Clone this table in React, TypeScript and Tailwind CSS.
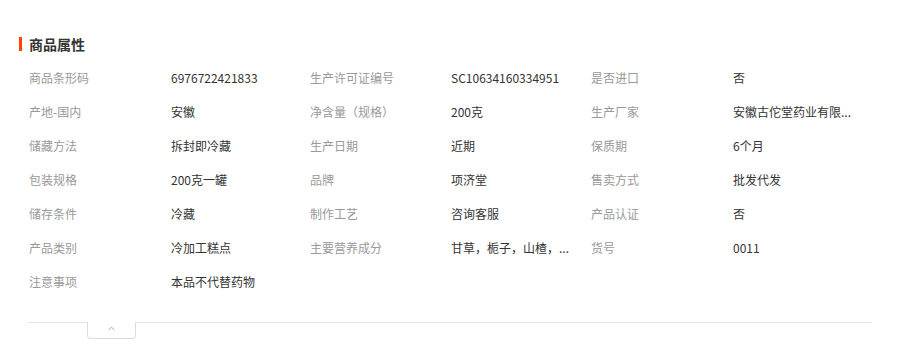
import { Fragment } from 'react';
import { ChevronUp } from 'lucide-react';

const ROWS: [string, string][][] = [
  [
    ['商品条形码', '6976722421833'],
    ['生产许可证编号', 'SC10634160334951'],
    ['是否进口', '否'],
  ],
  [
    ['产地-国内', '安徽'],
    ['净含量（规格）', '200克'],
    ['生产厂家', '安徽古佗堂药业有限...'],
  ],
  [
    ['储藏方法', '拆封即冷藏'],
    ['生产日期', '近期'],
    ['保质期', '6个月'],
  ],
  [
    ['包装规格', '200克一罐'],
    ['品牌', '项济堂'],
    ['售卖方式', '批发代发'],
  ],
  [
    ['储存条件', '冷藏'],
    ['制作工艺', '咨询客服'],
    ['产品认证', '否'],
  ],
  [
    ['产品类别', '冷加工糕点'],
    ['主要营养成分', '甘草，栀子，山楂，...'],
    ['货号', '0011'],
  ],
  [['注意事项', '本品不代替药物']],
];

export default function App() {
  return (
    <div
      className="w-[909px] h-[361px] bg-white pl-[19px]"
      style={{ fontFamily: '"Noto Sans CJK SC", "Noto Sans", sans-serif' }}
    >
      <div className="pt-[37px] flex items-center gap-[7px] h-[51px]">
        <span className="w-[3px] h-[14px] bg-[#ff4400]" />
        <h2 className="text-[14px] leading-[14px] font-bold text-[#333]">商品属性</h2>
      </div>

      <div className="mt-[10px] pl-[10px]">
        {ROWS.map((row, i) => (
          <div
            key={i}
            className="grid grid-cols-[142px_139px_141px_140px_142px_1fr] h-[34px] items-center text-[12px] leading-[18px]"
          >
            {row.map(([label, value]) => (
              <Fragment key={label}>
                <span className="text-[#999] whitespace-nowrap">{label}</span>
                <span className="text-[#333] whitespace-nowrap">{value}</span>
              </Fragment>
            ))}
          </div>
        ))}
      </div>

      <div className="mt-[23px] ml-[9px] w-[844px] flex items-start">
        <div className="w-[59px] border-t border-[#e5e5e5]" />
        <div className="w-[49px] h-[17px] border-x border-b border-[#dcdcdc] rounded-b-[4px] flex justify-center items-start">
          <ChevronUp size={11} strokeWidth={1.6} className="text-[#7a8aa0] mt-[1px]" />
        </div>
        <div className="flex-1 border-t border-[#e5e5e5]" />
      </div>
    </div>
  );
}
